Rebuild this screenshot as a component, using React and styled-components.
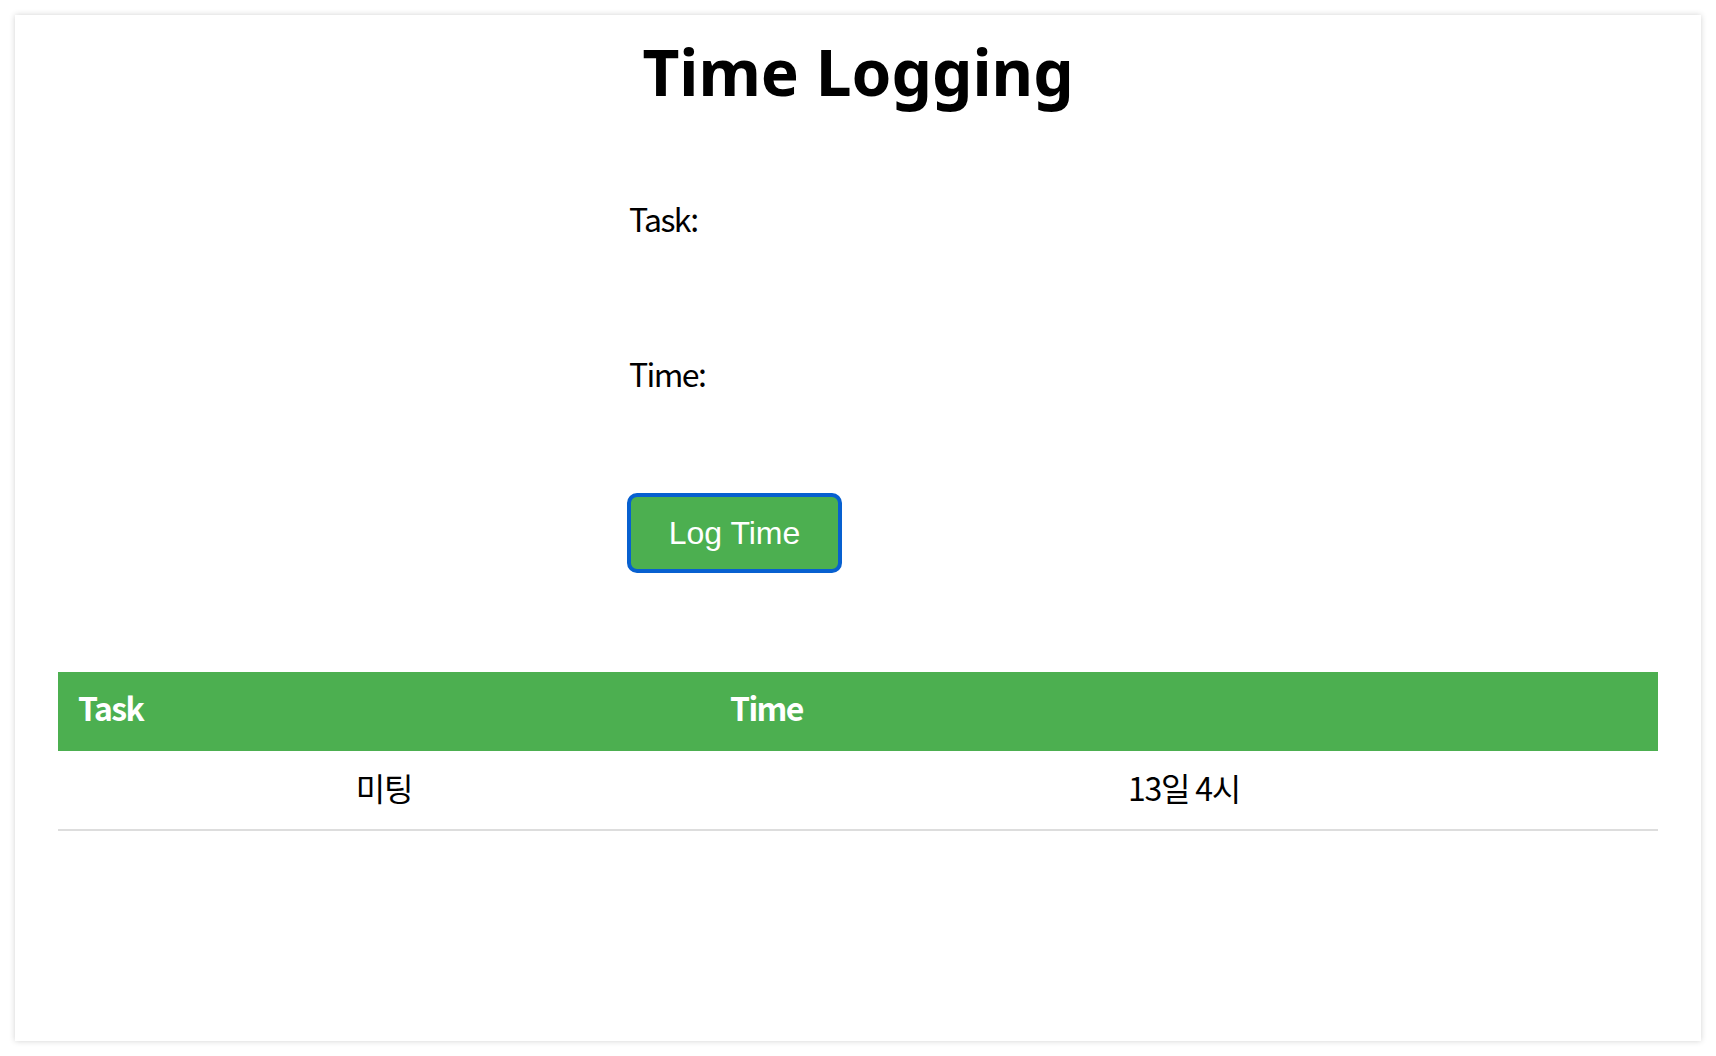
import React from "react";
import styled, { createGlobalStyle } from "styled-components";

const GlobalStyle = createGlobalStyle`
  html, body {
    margin: 0;
    padding: 0;
    background: #ffffff;
  }
  body {
    font-family: "Noto Sans CJK KR", "Noto Sans", sans-serif;
    font-size: 32px;
    color: #000000;
  }
`;

const Page = styled.div`
  padding: 15px;
  width: 1716px;
  height: 1056px;
  box-sizing: border-box;
`;

const Card = styled.div`
  height: 1026px;
  background: #ffffff;
  box-shadow: 0 0 6px rgba(0, 0, 0, 0.18);
  padding: 12px 42px 0;
  box-sizing: border-box;
`;

const Title = styled.h1`
  margin: 0;
  text-align: center;
  font-family: "Noto Sans", "Noto Sans CJK KR", sans-serif;
  font-size: 64px;
  font-weight: 700;
  line-height: 90px;
`;

const Form = styled.form`
  width: 462px;
  margin: 79px auto 0;
  display: flex;
  flex-direction: column;
`;

const Field = styled.div`
  display: flex;
  flex-direction: column;
  margin-bottom: ${(p) => p.$space}px;
`;

const Label = styled.label`
  font-size: 32px;
  line-height: 44px;
  letter-spacing: -1.6px;
  padding-left: 2px;
`;

const Input = styled.input`
  height: 58px;
  border: none;
  outline: none;
  background: transparent;
  font: inherit;
  padding: 0;
`;

const Button = styled.button`
  align-self: flex-start;
  width: 215px;
  height: 80px;
  box-sizing: border-box;
  border: 4px solid #0760d0;
  border-radius: 10px;
  background: #4caf50;
  color: #ffffff;
  font-family: "Liberation Sans", Arial, sans-serif;
  font-size: 32px;
  cursor: pointer;
  padding: 0;
`;

const Table = styled.table`
  width: 1600px;
  margin: 99px auto 0;
  border-collapse: collapse;
  table-layout: fixed;
`;

const Th = styled.th`
  width: ${(p) => p.$width || "auto"};
  background: #4caf50;
  color: #ffffff;
  text-align: left;
  font-weight: 700;
  font-size: 32px;
  line-height: 39px;
  letter-spacing: -1.6px;
  padding: 16px 20px 24px;
`;

const Td = styled.td`
  text-align: center;
  font-size: 32px;
  line-height: 38px;
  letter-spacing: -1.2px;
  padding: 17px 20px 23px;
  border-bottom: 2px solid #dddddd;
`;

const logs = [{ task: "미팅", time: "13일 4시" }];

export default function App() {
  return (
    <Page>
      <GlobalStyle />
      <Card>
        <Title>Time Logging</Title>
        <Form onSubmit={(e) => e.preventDefault()}>
          <Field $space={53}>
            <Label>Task:</Label>
            <Input type="text" />
          </Field>
          <Field $space={40}>
            <Label>Time:</Label>
            <Input type="text" />
          </Field>
          <Button type="submit">Log Time</Button>
        </Form>
        <Table>
          <thead>
            <tr>
              <Th $width="612px">Task</Th>
              <Th>Time</Th>
            </tr>
          </thead>
          <tbody>
            {logs.map((log, i) => (
              <tr key={i}>
                <Td>{log.task}</Td>
                <Td>{log.time}</Td>
              </tr>
            ))}
          </tbody>
        </Table>
      </Card>
    </Page>
  );
}
